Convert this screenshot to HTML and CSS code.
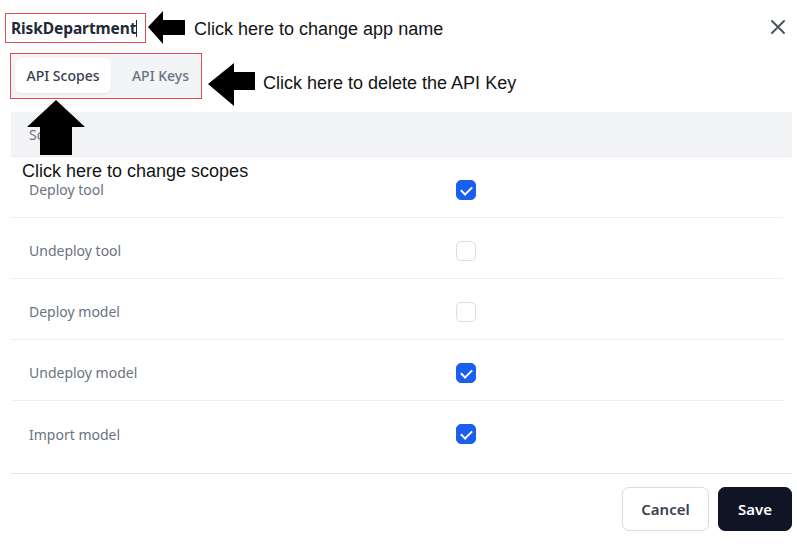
FILE: index.html
```html
<!DOCTYPE html>
<html lang="en">
<head>
<meta charset="utf-8">
<title>Edit application</title>
<link rel="stylesheet" href="styles.css">
</head>
<body>
<div class="dialog">
  <div class="head">
    <div class="name-box"><span class="name-text">RiskDepartment</span><span class="caret"></span></div>
    <svg class="arrow-left a1" width="38" height="34" viewBox="0 0 38 34"><polygon points="0,16 15,0 15,9 37,9 37,24 15,24 15,33" fill="#000"/></svg>
    <span class="note n1">Click here to change app name</span>
    <button class="close" aria-label="Close">
      <svg width="16" height="16" viewBox="0 0 16 16"><path d="M2 2 L14 14 M14 2 L2 14" stroke="#4b5563" stroke-width="2" stroke-linecap="round"/></svg>
    </button>
  </div>

  <div class="tabs-row">
    <div class="tabs-frame">
      <div class="tabs">
        <div class="tab active">API Scopes</div>
        <div class="tab">API Keys</div>
      </div>
    </div>
    <svg class="arrow-left a2" width="48" height="44" viewBox="0 0 48 44"><polygon points="0,21 26,0 26,9 47,9 47,27 26,27 26,43" fill="#000"/></svg>
    <span class="note n2">Click here to delete the API Key</span>
  </div>

  <div class="table">
    <div class="thead">Scope</div>
    <svg class="arrow-up" width="58" height="56" viewBox="0 0 58 56"><polygon points="29,0 58,27 45,27 45,55 13,55 13,27 0,27" fill="#000"/></svg>
    <span class="note n3">Click here to change scopes</span>
    <div class="row"><span class="label">Deploy tool</span><span class="check on"></span></div>
    <div class="row"><span class="label">Undeploy tool</span><span class="check"></span></div>
    <div class="row"><span class="label">Deploy model</span><span class="check"></span></div>
    <div class="row"><span class="label">Undeploy model</span><span class="check on"></span></div>
    <div class="row last"><span class="label">Import model</span><span class="check on"></span></div>
  </div>

  <div class="foot">
    <button class="btn cancel">Cancel</button>
    <button class="btn save">Save</button>
  </div>
</div>
</body>
</html>
```

FILE: styles.css
```css
* { box-sizing: border-box; }
html, body { margin: 0; background: #fff; }
body {
  width: 797px;
  height: 548px;
  overflow: hidden;
  font-family: "Noto Sans", "Open Sans", sans-serif;
}
.dialog { padding: 0 5px 0 5px; }

.head {
  display: flex;
  align-items: center;
  height: 53px;
  padding-top: 5px;
}
.name-box {
  width: 141px;
  height: 30px;
  margin-top: -2px;
  border: 1px solid #e24a56;
  display: flex;
  align-items: center;
  padding-left: 5px;
}
.name-text {
  font-weight: 700;
  font-size: 15.5px;
  color: #1f2937;
  letter-spacing: -0.1px;
}
.caret {
  width: 1px;
  height: 17px;
  background: #1f2937;
}
.arrow-left.a1 { margin-left: 2px; margin-top: -2px; }
.note {
  font-family: "Liberation Sans", Arial, sans-serif;
  font-size: 18px;
  color: #141414;
  white-space: nowrap;
}
.n1 { margin-left: 8px; }
.close {
  margin-left: auto;
  margin-right: 5px;
  margin-top: -5px;
  border: 0;
  background: none;
  padding: 0;
  width: 18px;
  height: 18px;
  display: flex;
  align-items: center;
  justify-content: center;
}

.tabs-row {
  display: flex;
  align-items: flex-start;
  padding-left: 5px;
  height: 46px;
}
.tabs-frame {
  border: 1px solid #e24a56;
  width: 192px;
  height: 46px;
  flex-shrink: 0;
}
.tabs {
  background: #f3f4f6;
  height: 100%;
  display: flex;
  padding: 4px 3px 5px 4px;
}
.tab {
  font-size: 14px;
  font-weight: 500;
  color: #6b7280;
  display: flex;
  align-items: center;
  justify-content: center;
  white-space: nowrap;
  flex: 1;
  padding-left: 12px;
}
.tab.active {
  flex: 0 0 96px;
  padding-left: 0;
  background: #fff;
  color: #374151;
  border-radius: 6px;
  box-shadow: 0 1px 2px rgba(0, 0, 0, 0.08);
}
.arrow-left.a2 { margin-left: 6px; margin-top: 10px; flex-shrink: 0; }
.n2 { margin-left: 7px; margin-top: 20px; }

.table {
  position: relative;
  margin: 13px 0 0 6px;
}
.thead {
  background: #f3f4f6;
  height: 45px;
  display: flex;
  align-items: center;
  padding-left: 18px;
  font-size: 14px;
  color: #6b7280;
  border-bottom: 1px solid #e9eaee;
}
.arrow-up {
  position: absolute;
  left: 16px;
  top: -12px;
}
.n3 {
  position: absolute;
  left: 11px;
  top: 49px;
}
.row {
  display: flex;
  align-items: center;
  height: 61px;
  padding-top: 5px;
  padding-left: 18px;
  margin-right: 9px;
  border-bottom: 1px solid #eceef1;
}
.row.last { border-bottom: 0; }
.label {
  font-size: 14px;
  color: #6b7280;
  width: 427px;
}
.check {
  width: 20px;
  height: 20px;
  border-radius: 5px;
  border: 1px solid #d9dce1;
  background: #fff;
  position: relative;
}
.check.on {
  background: #1a5ff0;
  border-color: #1a5ff0;
}
.check.on::after {
  content: "";
  position: absolute;
  left: 6px;
  top: 3px;
  width: 5px;
  height: 9px;
  border: solid #fff;
  border-width: 0 2px 2px 0;
  transform: rotate(45deg);
}

.foot {
  margin: 11px 0 0 6px;
  border-top: 1px solid #e2e4e8;
  display: flex;
  justify-content: flex-end;
  gap: 9px;
  padding-top: 13px;
}
.btn {
  height: 44px;
  border-radius: 7px;
  font-family: "Noto Sans", "Open Sans", sans-serif;
  font-size: 15px;
  font-weight: 600;
}
.cancel {
  width: 87px;
  background: #fff;
  border: 1px solid #d9dce1;
  color: #374151;
}
.save {
  width: 74px;
  background: #0f1524;
  border: 1px solid #0f1524;
  color: #fff;
}
```
